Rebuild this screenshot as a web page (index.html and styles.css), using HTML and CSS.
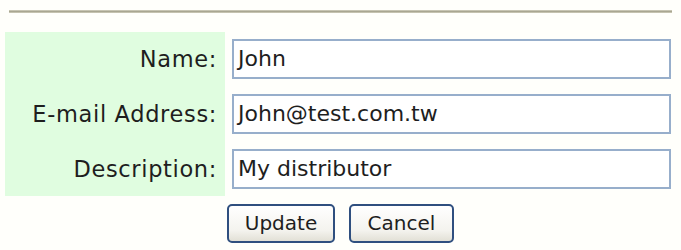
FILE: index.html
```html
<!DOCTYPE html>
<html>
<head>
<meta charset="utf-8">
<link rel="stylesheet" href="styles.css">
</head>
<body>
<div class="page">
  <div class="rule"></div>
  <div class="form">
    <div class="labels">
      <div class="label">Name:</div>
      <div class="label">E-mail Address:</div>
      <div class="label">Description:</div>
    </div>
    <div class="fields">
      <div class="field">John</div>
      <div class="field">John@test.com.tw</div>
      <div class="field">My distributor</div>
    </div>
  </div>
  <div class="buttons">
    <div class="btn btn-update">Update</div>
    <div class="btn btn-cancel">Cancel</div>
  </div>
</div>
</body>
</html>
```
FILE: styles.css
```css
html, body {
  margin: 0;
  padding: 0;
  background: #fffffb;
}
.page {
  width: 681px;
  height: 250px;
  font-family: "DejaVu Sans", Verdana, sans-serif;
  color: #1e1e1e;
  padding-top: 10px;
  box-sizing: border-box;
}
.rule {
  margin-left: 9px;
  width: 663px;
  height: 3px;
  background: linear-gradient(#d6d3c2, #a9a792 50%, #d3d0be);
}
.form {
  display: flex;
  margin-top: 19px;
  margin-left: 5px;
}
.labels {
  width: 220px;
  background: #e0fde0;
  padding: 7px 0;
  display: flex;
  flex-direction: column;
  gap: 15px;
  box-sizing: border-box;
}
.label {
  height: 40px;
  line-height: 40px;
  text-align: right;
  padding-right: 8px;
  font-size: 22.5px;
  letter-spacing: 0.65px;
}
.fields {
  margin-left: 7px;
  padding: 7px 0;
  display: flex;
  flex-direction: column;
  gap: 15px;
}
.field {
  width: 439px;
  height: 40px;
  box-sizing: border-box;
  border: 2px solid #97aecb;
  background: #ffffff;
  line-height: 36px;
  padding-left: 4px;
  font-size: 22px;
}
.buttons {
  display: flex;
  gap: 14px;
  margin-left: 227px;
  margin-top: 8px;
}
.btn {
  height: 39px;
  box-sizing: border-box;
  border: 2px solid #2f4f7f;
  border-radius: 5px;
  background: linear-gradient(#ffffff, #f4f3ee 70%, #e2e0d6);
  font-size: 20px;
  line-height: 35px;
  text-align: center;
}
.btn-update { width: 108px; }
.btn-cancel { width: 105px; }
```
